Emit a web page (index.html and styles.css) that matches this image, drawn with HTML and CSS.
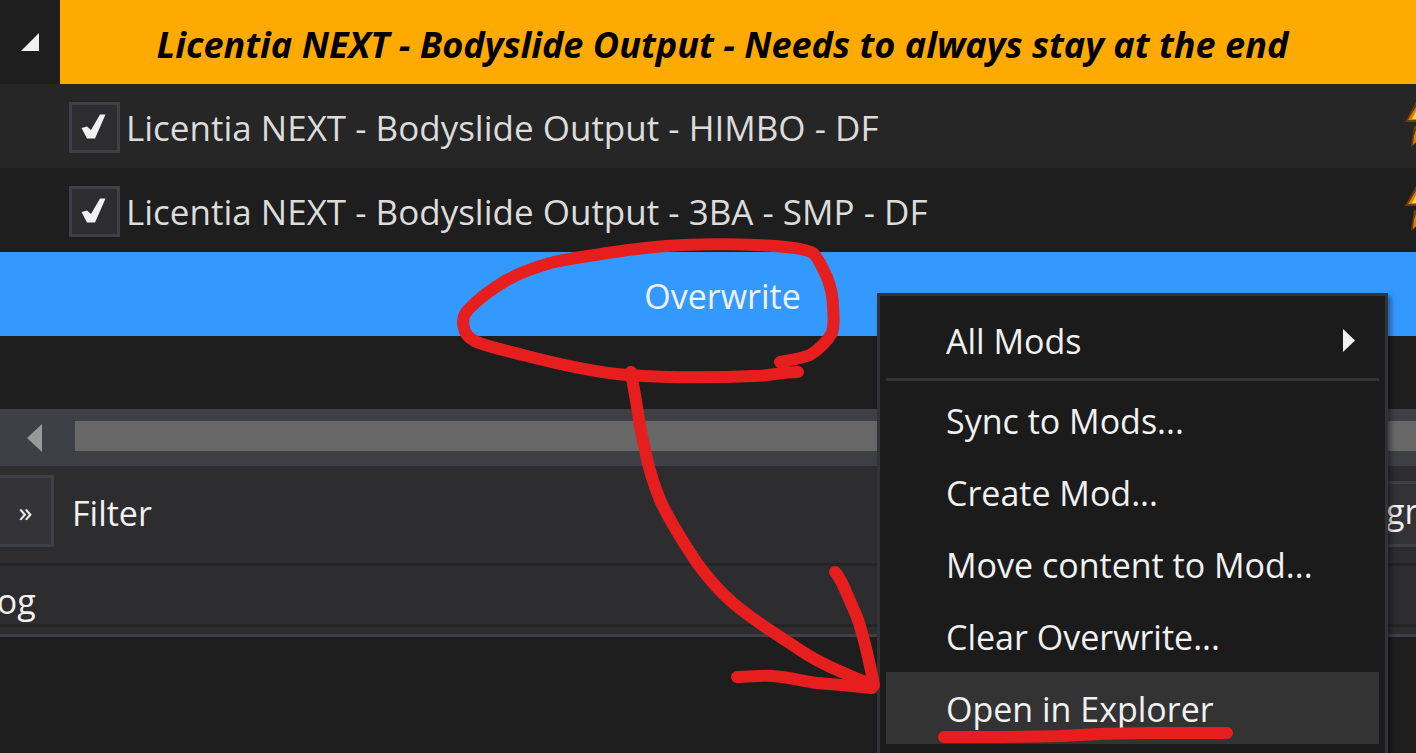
FILE: index.html
```html
<!DOCTYPE html>
<html lang="en">
<head>
  <meta charset="UTF-8">
  <title>Mod Organizer - Overwrite</title>
  <link rel="stylesheet" href="styles.css">
</head>
<body>

  <!-- Mod list -->
  <div class="modlist">
    <div class="row row-head">
      <div class="head-cell">
        <svg class="tri-icon" width="18" height="18" viewBox="0 0 18 18"><polygon points="18,0 18,18 0,18"/></svg>
      </div>
      <div class="head-title">Licentia NEXT - Bodyslide Output - Needs to always stay at the end</div>
    </div>

    <div class="row row-mod alt">
      <span class="check">
        <svg width="30" height="30" viewBox="0 0 30 30"><polygon points="1.5,15 7,13.5 11,17 20,1.5 25.5,1.5 15,25.5 7,25.5"/></svg>
      </span>
      <span class="mod-name">Licentia NEXT - Bodyslide Output - HIMBO - DF</span>
      <svg class="flag" width="11" height="46" viewBox="0 0 11 46">
        <polygon class="flag-dark" points="11,0 0,20 11,20"/>
        <polygon class="flag-mid" points="11,5 3,18 11,18"/>
        <polygon class="flag-hot" points="11,9 7,17 11,17"/>
        <polygon class="flag-dark" points="11,24 9,24 6,45 11,41"/>
        <polygon class="flag-mid" points="11,28 9,34 8,43 11,40"/>
      </svg>
    </div>

    <div class="row row-mod">
      <span class="check">
        <svg width="30" height="30" viewBox="0 0 30 30"><polygon points="1.5,15 7,13.5 11,17 20,1.5 25.5,1.5 15,25.5 7,25.5"/></svg>
      </span>
      <span class="mod-name">Licentia NEXT - Bodyslide Output - 3BA - SMP - DF</span>
      <svg class="flag" width="11" height="46" viewBox="0 0 11 46">
        <polygon class="flag-dark" points="11,0 0,20 11,20"/>
        <polygon class="flag-mid" points="11,5 3,18 11,18"/>
        <polygon class="flag-hot" points="11,9 7,17 11,17"/>
        <polygon class="flag-dark" points="11,24 9,24 6,45 11,41"/>
        <polygon class="flag-mid" points="11,28 9,34 8,43 11,40"/>
      </svg>
    </div>

    <div class="row row-overwrite"><span>Overwrite</span></div>
  </div>

  <div class="gap"></div>

  <!-- Horizontal scrollbar -->
  <div class="hscroll">
    <svg class="scroll-arrow" width="15" height="28" viewBox="0 0 15 28"><polygon points="15,0 15,28 0,14"/></svg>
    <div class="scroll-thumb"></div>
  </div>

  <!-- Filter bar -->
  <div class="filterbar">
    <button class="more-btn" type="button">»</button>
    <span class="filter-label">Filter</span>
    <div class="group-box">gr</div>
  </div>

  <div class="tabbar">
    <span class="tab-label">Log</span>
  </div>
  <div class="tab-edge"></div>

  <div class="log-area"></div>

  <!-- Context menu -->
  <div class="menu">
    <div class="menu-item">
      <span>All Mods</span>
      <svg class="sub-arrow" width="12" height="23" viewBox="0 0 12 23"><polygon points="0,0 12,11.5 0,23"/></svg>
    </div>
    <div class="menu-sep"></div>
    <div class="menu-item">Sync to Mods...</div>
    <div class="menu-item">Create Mod...</div>
    <div class="menu-item">Move content to Mod...</div>
    <div class="menu-item">Clear Overwrite...</div>
    <div class="menu-item active">Open in Explorer</div>
  </div>

  <!-- Red marker annotations drawn over the screenshot -->
  <svg class="marker" width="1416" height="753" viewBox="0 0 1416 753">
    <path d="M798 372 C780 372 770 376 755 376 C710 378 670 378 627 375 C590 372 550 362 523 355 C500 349 480 345 473 340 C462 334 460 318 468 310 C480 297 495 287 507 280 C525 270 535 268 550 263 C570 258 590 256 607 253 C640 248 660 246 683 245 C710 244 735 244 757 245 C780 246 805 248 813 253 C820 260 822 268 827 277 C831 288 833 298 833 307 C834 318 834 326 832 333 C826 343 818 350 810 355 C800 359 790 360 780 362"/>
    <path d="M631 372 C634 390 636 400 638 413 C640 428 642 438 645 450 C649 470 654 485 660 500 C670 522 685 545 697 563 C708 578 720 592 733 603 C755 622 778 635 800 650 C820 664 838 670 853 677 C862 681 868 683 873 685"/>
    <path d="M835 572 C841 578 845 590 857 617 C865 640 870 665 874 685"/>
    <path d="M737 677 C750 677 762 675 773 676 C790 677 800 681 817 683 C840 685 855 686 872 688"/>
    <path d="M944 737 C980 737 1020 737 1060 736 C1090 734 1120 733 1150 733 C1180 733 1205 733 1227 733"/>
  </svg>

</body>
</html>
```

FILE: styles.css
```css
/* General Reset */
* {
  margin: 0;
  padding: 0;
  box-sizing: border-box;
}

html, body {
  width: 1416px;
  height: 753px;
  overflow: hidden;
}

body {
  position: relative;
  font-family: "Open Sans", "Noto Sans", sans-serif;
  font-size: 34px;
  background: #1e1e1e;
  color: #dcdcdc;
}

/* Mod list */
.row {
  height: 84px;
  display: flex;
  align-items: center;
}

.head-cell {
  width: 60px;
  height: 84px;
  padding: 33px 0 0 21px;
  background: #1e1e1e;
}

.tri-icon {
  display: block;
  fill: #f1f1f1;
}

.head-title {
  flex: 1;
  height: 84px;
  line-height: 88px;
  padding-right: 31px;
  background: #ffaa00;
  color: #000;
  font-size: 36.1px;
  font-weight: 700;
  font-style: italic;
  text-align: center;
  white-space: nowrap;
}

.row-mod {
  padding-left: 69px;
  background: #1e1e1e;
}

.row-mod.alt {
  background: #262626;
}

.check {
  width: 51px;
  height: 51px;
  display: flex;
  align-items: center;
  justify-content: center;
  margin: 3px 6px 0 0;
  background: #2d2d30;
  border: 3px solid #3f3f46;
}

.check svg {
  fill: #f1f1f1;
}

.mod-name {
  flex: 1;
  padding-top: 3px;
  font-size: 35px;
  white-space: nowrap;
}

.flag {
  flex: none;
  margin-top: -2px;
}

.flag-dark { fill: #6b3d08; }
.flag-mid { fill: #e07c06; }
.flag-hot { fill: #ffd93b; }

.row-overwrite {
  justify-content: center;
  padding: 3px 31px 0 60px;
  background: #3399ff;
  color: #f1f1f1;
}

.gap {
  height: 73px;
}

/* Horizontal scrollbar */
.hscroll {
  height: 57px;
  display: flex;
  align-items: center;
  padding-left: 27px;
  background: #3f3f46;
}

.scroll-arrow {
  flex: none;
  fill: #999;
  margin-right: 33px;
}

.scroll-thumb {
  flex: 1;
  height: 30px;
  margin-bottom: 4px;
  background: #686868;
}

/* Filter bar */
.filterbar {
  height: 100px;
  display: flex;
  align-items: flex-start;
  background: #2d2d30;
  border-bottom: 3px solid #252526;
  color: #f1f1f1;
}

.more-btn {
  width: 54px;
  height: 72px;
  margin-top: 9px;
  background: #333337;
  border: 3px solid #3f3f46;
  border-left: none;
  color: #f1f1f1;
  font-family: inherit;
  font-size: 28px;
}

.filter-label {
  margin: 24px 0 0 18px;
}

.group-box {
  width: 130px;
  height: 66px;
  margin: 15px -2px 0 auto;
  padding-left: 98px;
  background: #333337;
  border-top: 3px solid #3f3f46;
  border-bottom: 3px solid #3f3f46;
  line-height: 54px;
  white-space: nowrap;
  overflow: hidden;
}

.tabbar {
  height: 61px;
  background: #2d2d30;
  border-bottom: 3px solid #252526;
  color: #f1f1f1;
  line-height: 70px;
}

.tab-label {
  display: inline-block;
  margin-left: -21px;
}

.tab-edge {
  height: 10px;
  background: #2d2d30;
  border-bottom: 3px solid #3f3f46;
}

.log-area {
  height: 116px;
  background: #1e1e1e;
}

/* Context menu */
.menu {
  position: absolute;
  left: 877px;
  top: 293px;
  width: 511px;
  height: 470px;
  padding: 8px 6px;
  background: #1b1b1c;
  border: 3px solid #333337;
  box-shadow: 3px 3px 5px rgba(0, 0, 0, 0.4);
  color: #f1f1f1;
}

.menu-item {
  height: 72px;
  display: flex;
  align-items: center;
  justify-content: space-between;
  padding: 1px 24px 0 60px;
  white-space: nowrap;
}

.menu-item.active {
  background: #333334;
}

.sub-arrow {
  fill: #f1f1f1;
  margin-top: -1px;
}

.menu-sep {
  height: 3px;
  margin: 2px 0 3px;
  background: #333337;
}

/* Red marker */
.marker {
  position: absolute;
  left: 0;
  top: 0;
  fill: none;
  stroke: #e61e1e;
  stroke-width: 12;
  stroke-linecap: round;
  stroke-linejoin: round;
}
```
